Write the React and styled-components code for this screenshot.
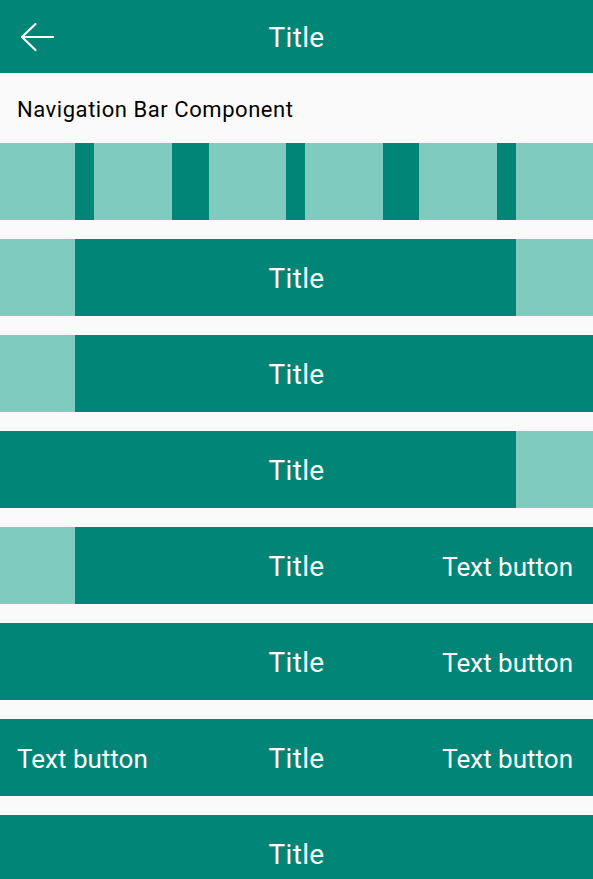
import styled, { createGlobalStyle } from 'styled-components';

const dark = '#008577';
const light = '#7fcbbf';

const GlobalStyle = createGlobalStyle`
  html, body {
    margin: 0;
    padding: 0;
    background: #fafafa;
    font-family: Roboto, "Noto Sans", sans-serif;
  }
`;

const Page = styled.div`
  width: 593px;
  height: 879px;
  overflow: hidden;
  background: #fafafa;
  display: flex;
  flex-direction: column;
`;

const AppBar = styled.header`
  height: 73px;
  flex: none;
  background: ${dark};
  display: grid;
  grid-template-columns: 1fr auto 1fr;
  align-items: center;
  color: #fff;
`;

const BackButton = styled.button`
  justify-self: start;
  margin-left: 19px;
  padding: 0;
  border: 0;
  background: none;
  display: flex;
  width: 36px;
  height: 36px;
  align-items: center;
  justify-content: center;
`;

const Caption = styled.div`
  height: 70px;
  flex: none;
  display: flex;
  align-items: center;
  padding-left: 17px;
  padding-top: 2px;
  box-sizing: border-box;
  font-size: 22px;
  letter-spacing: 0.55px;
  color: #000;
`;

const List = styled.div`
  display: flex;
  flex-direction: column;
  gap: 19px;
`;

const Stripes = styled.div`
  height: 77px;
  flex: none;
  display: flex;
`;

const Segment = styled.div`
  flex: none;
  background: ${p => (p.$on ? dark : light)};
`;

const Bar = styled.div`
  height: 77px;
  flex: none;
  background: ${dark};
  display: grid;
  grid-template-columns: 1fr auto 1fr;
  align-items: stretch;
  color: #fff;
`;

const Slot = styled.div`
  display: flex;
  align-items: center;
  justify-self: ${p => (p.$end ? 'end' : 'start')};
  width: ${p => (p.$w ? `${p.$w}px` : 'auto')};
  background: ${p => (p.$ghost ? light : 'transparent')};
  padding-left: ${p => (p.$text && !p.$end ? '17px' : '0')};
  padding-right: ${p => (p.$text && p.$end ? '20px' : '0')};
`;

const Title = styled.div`
  display: flex;
  align-items: center;
  padding-top: 2px;
  font-size: 28px;
  line-height: 1;
  letter-spacing: 0.3px;
`;

const TextButton = styled.span`
  font-size: 26px;
  line-height: 1;
  padding-top: 2px;
  color: #fff;
  white-space: nowrap;
`;

const stripes = [
  [75, false], [19, true], [78, false], [37, true], [77, false], [19, true],
  [78, false], [36, true], [78, false], [19, true], [77, false],
];

const BackArrow = () => (
  <svg width="34" height="30" viewBox="0 0 34 30" fill="none" stroke="#fff" strokeWidth="2.2" strokeLinecap="round" strokeLinejoin="round">
    <path d="M2 15 H33" />
    <path d="M15.5 2 L2 15 L15.5 28" />
  </svg>
);

const NavBar = ({ left, right }) => (
  <Bar>
    {left === 'ghost' && <Slot $ghost $w={75} />}
    {left === 'text' && <Slot $text><TextButton>Text button</TextButton></Slot>}
    {!left && <Slot />}
    <Title>Title</Title>
    {right === 'ghost' && <Slot $end $ghost $w={77} />}
    {right === 'text' && <Slot $end $text><TextButton>Text button</TextButton></Slot>}
    {!right && <Slot $end />}
  </Bar>
);

export default function App() {
  return (
    <Page>
      <GlobalStyle />
      <AppBar>
        <BackButton aria-label="back"><BackArrow /></BackButton>
        <Title>Title</Title>
        <div />
      </AppBar>
      <Caption>Navigation Bar Component</Caption>
      <List>
        <Stripes>
          {stripes.map(([w, on], i) => (
            <Segment key={i} $on={on} style={{ width: w }} />
          ))}
        </Stripes>
        <NavBar left="ghost" right="ghost" />
        <NavBar left="ghost" />
        <NavBar right="ghost" />
        <NavBar left="ghost" right="text" />
        <NavBar right="text" />
        <NavBar left="text" right="text" />
        <NavBar />
      </List>
    </Page>
  );
}
